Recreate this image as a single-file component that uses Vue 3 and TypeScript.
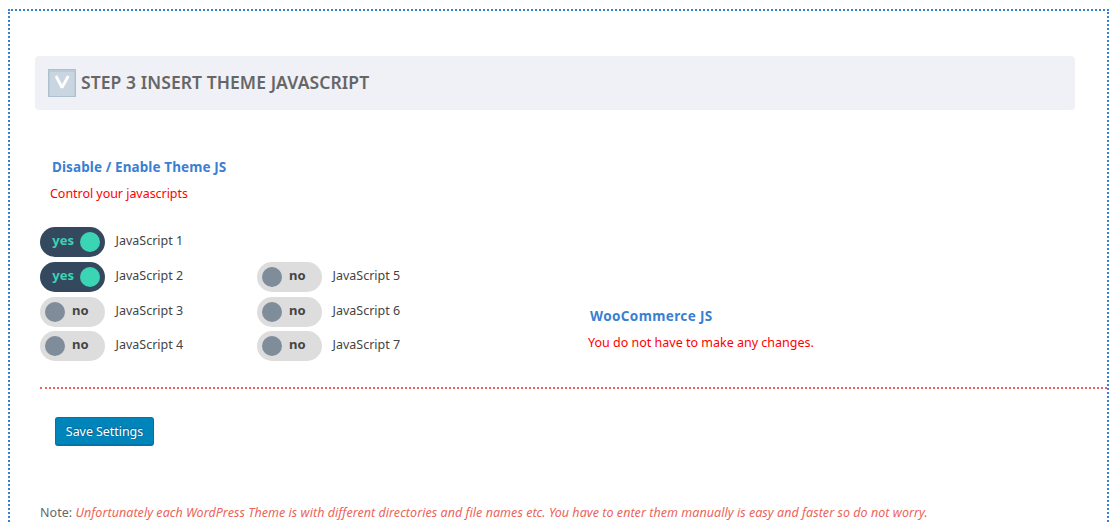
<script setup lang="ts">
import { ref } from 'vue'

interface Toggle {
  id: number
  on: boolean
}

const columns = ref<Toggle[][]>([
  [
    { id: 1, on: true },
    { id: 2, on: true },
    { id: 3, on: false },
    { id: 4, on: false },
  ],
  [
    { id: 5, on: false },
    { id: 6, on: false },
    { id: 7, on: false },
  ],
])
</script>

<template>
  <div class="page">
    <main class="panel">
      <header class="step">
        <svg class="logo" width="28" height="28" viewBox="0 0 28 28">
          <rect width="28" height="28" fill="#aebfcd" />
          <rect x="1" y="1" width="26" height="26" fill="#bccbd8" />
          <rect x="2" y="3" width="24" height="24" fill="#c9d6e2" />
          <path d="M8 7L14 18.5L20.3 7" fill="none" stroke="#fff" stroke-width="2.8" stroke-linejoin="bevel" />
        </svg>
        <h1>STEP 3 INSERT THEME JAVASCRIPT</h1>
      </header>

      <section class="controls">
        <div class="theme">
          <h2>Disable / Enable Theme JS</h2>
          <p class="hint">Control your javascripts</p>
          <div class="columns">
            <div v-for="(items, c) in columns" :key="c" class="column">
              <div v-for="item in items" :key="item.id" class="row">
                <button class="switch" :class="{ on: item.on }" @click="item.on = !item.on">
                  <span class="state">{{ item.on ? 'yes' : 'no' }}</span>
                  <span class="knob"></span>
                </button>
                <span class="label">JavaScript {{ item.id }}</span>
              </div>
            </div>
          </div>
        </div>
        <div class="woo">
          <h2>WooCommerce JS</h2>
          <p class="hint">You do not have to make any changes.</p>
        </div>
      </section>

      <hr />
      <button class="save">Save Settings</button>
      <p class="note">Note: <em>Unfortunately each WordPress Theme is with different directories and file names etc. You have to enter them manually is easy and faster so do not worry.</em></p>
    </main>
  </div>
</template>

<style>
body {
  margin: 0;
  background: #fff;
}
</style>

<style scoped>
.page {
  height: 524px;
  padding: 9px 0 0 8px;
  box-sizing: border-box;
  overflow: hidden;
  font-family: "Noto Sans", "Open Sans", sans-serif;
  font-size: 12.5px;
  color: #444;
}
.panel {
  width: 1101px;
  height: 600px;
  box-sizing: border-box;
  border: 2px dotted #3a80d2;
  padding: 45px 0 0 25px;
}
h1, h2, p {
  margin: 0;
  white-space: nowrap;
}
.step {
  display: flex;
  align-items: center;
  width: 1040px;
  height: 54px;
  padding-left: 13px;
  box-sizing: border-box;
  border-radius: 4px;
  background: #f0f1f7;
}
.logo {
  flex: none;
}
h1 {
  margin: -2px 0 0 5px;
  font-size: 17.5px;
  line-height: 24px;
  font-weight: 600;
  color: #666;
  letter-spacing: 0.07px;
}
.controls {
  display: flex;
  height: 277px;
  box-sizing: border-box;
  padding: 47px 0 0 5px;
}
.theme {
  width: 538px;
}
h2 {
  padding-left: 12px;
  font-size: 13.5px;
  line-height: 20px;
  font-weight: 700;
  color: #3a80d2;
  letter-spacing: 0.1px;
}
.woo h2 {
  letter-spacing: 0.38px;
}
.hint {
  margin-top: 7px;
  padding-left: 10px;
  line-height: 20px;
  color: #f00;
}
.theme .hint {
  letter-spacing: -0.04px;
}
.columns {
  display: flex;
  align-items: flex-end;
  margin-top: 23px;
}
.column {
  display: grid;
  width: 217px;
  grid-auto-rows: 30px;
  row-gap: 5px;
}
.row {
  display: flex;
  height: 30px;
}
.row:last-child {
  margin-top: -1px;
}
.switch {
  display: flex;
  flex-direction: row-reverse;
  justify-content: flex-end;
  align-items: center;
  width: 65px;
  height: 30px;
  padding: 0 5px;
  border: 0;
  border-radius: 15px;
  background: #ddd;
  color: #444;
  font: 700 13px/18px "Noto Sans", "Open Sans", sans-serif;
}
.switch.on {
  flex-direction: row;
  background: #34495e;
  color: #3bd4b4;
}
.state {
  margin: -4px 0 0 7px;
}
.on .state {
  margin: -4px 6px 0 0;
}
.knob {
  width: 20px;
  height: 20px;
  flex: none;
  border-radius: 50%;
  background: #7f8c9a;
}
.on .knob {
  background: #3bd4b4;
}
.label {
  margin-left: 10.5px;
  line-height: 27px;
}
.woo {
  padding-top: 149px;
}
hr {
  margin: 0 0 0 5px;
  border: 0;
  border-top: 2px dotted #ec6459;
}
.save {
  display: block;
  width: 99px;
  height: 29px;
  margin: 28px 0 0 20px;
  padding: 0;
  border: 1px solid #0073aa;
  border-bottom-width: 2px;
  border-radius: 3px;
  background: #0085ba;
  color: #fff;
  font: 12.5px/25px "Noto Sans", "Open Sans", sans-serif;
  letter-spacing: -0.06px;
  text-shadow: 0 -1px 1px #006799, 1px 0 1px #006799;
}
.note {
  margin: 57px 0 0 5px;
  line-height: 20px;
  color: #666;
  letter-spacing: 0.05px;
}
em {
  color: #ec6459;
}
</style>
